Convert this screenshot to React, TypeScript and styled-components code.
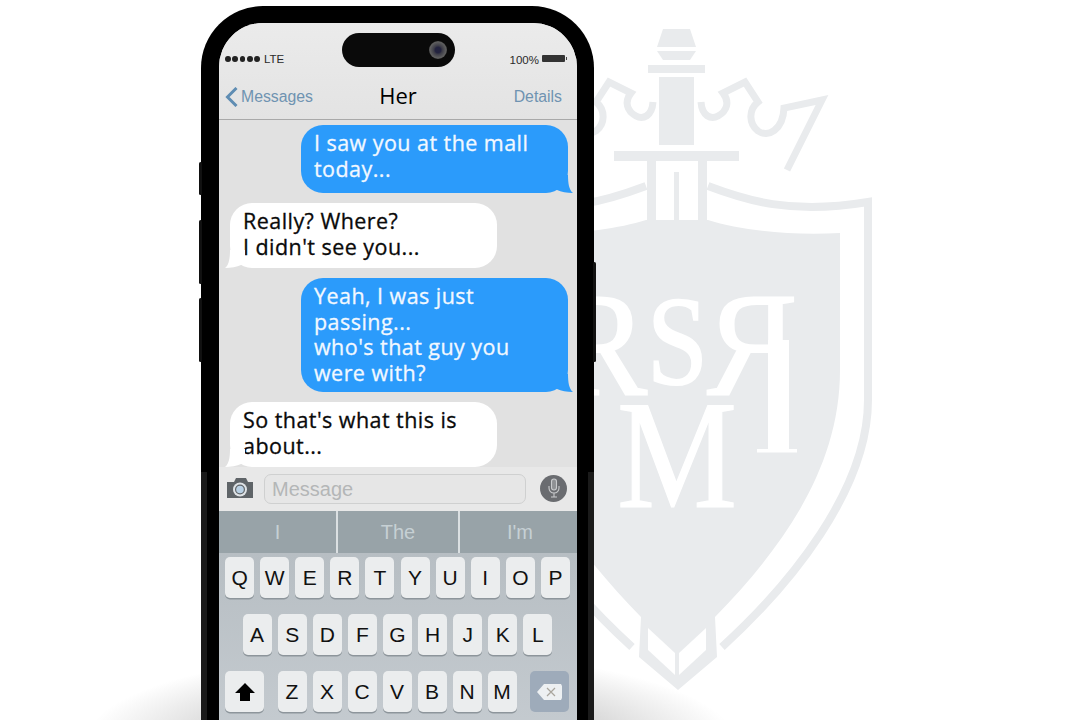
import styled, { createGlobalStyle } from 'styled-components';

const GlobalStyle = createGlobalStyle`
    html, body {
        margin: 0;
        background: #fff;
    }
`;

const Page = styled.div`
    position: relative;
    width: 1080px;
    height: 720px;
    overflow: hidden;
    background: #fff;
    padding: 6px 0 0 201px;
    box-sizing: border-box;
`;

const Watermark = styled.svg`
    position: absolute;
    left: 0;
    top: 0;
    width: 1080px;
    height: 720px;
`;

const FloorShadow = styled.div`
    position: absolute;
    left: 85px;
    top: 630px;
    width: 650px;
    height: 180px;
    background: radial-gradient(ellipse 50% 50% at 50% 62%, rgba(120, 120, 120, 0.58) 0%, rgba(140, 140, 140, 0.38) 55%, rgba(200, 200, 200, 0) 100%);
`;

const Phone = styled.div`
    position: relative;
    width: 393px;
    height: 760px;
    box-sizing: border-box;
    padding: 17px 17px 0 18px;
    background: #000;
    border-radius: 62px;
    &::before,
    &::after {
        content: '';
        position: absolute;
        top: 466px;
        bottom: 0;
        width: 6px;
        background: #1a1a1a;
    }
    &::before {
        left: 0;
    }
    &::after {
        right: 0;
    }
`;

const SideButton = styled.div<{ $top: number; $height: number; $right?: boolean }>`
    position: absolute;
    top: ${(props) => props.$top}px;
    height: ${(props) => props.$height}px;
    width: 3px;
    background: #111;
    border-radius: 2px;
    ${(props) => (props.$right ? 'right: -2px;' : 'left: -2px;')}
`;

const Screen = styled.div`
    position: relative;
    z-index: 1;
    height: 743px;
    overflow: hidden;
    background: #e2e2e2;
    border-radius: 44px 44px 0 0;
`;

const Island = styled.div`
    position: absolute;
    left: 123px;
    top: 10px;
    width: 113px;
    height: 34px;
    background: #0a0a0a;
    border-radius: 17px;
`;

const CameraLens = styled.div`
    position: absolute;
    right: 8px;
    top: 8px;
    width: 18px;
    height: 18px;
    border-radius: 50%;
    background: radial-gradient(circle, #23233f 0 22%, #3d3d48 34%, #5e5e5e 62%, #1c1c1c 100%);
`;

const Header = styled.header`
    height: 97px;
    box-sizing: border-box;
    background: linear-gradient(#ebebeb, #e3e3e3);
    border-bottom: 1px solid #a9a9a9;
`;

const StatusRow = styled.div`
    display: flex;
    align-items: center;
    justify-content: space-between;
    height: 14px;
    padding: 29px 12px 0 6px;
    font-family: 'Liberation Sans', sans-serif;
    font-size: 11.5px;
    color: #2a2a2a;
`;

const Carrier = styled.span`
    display: flex;
    align-items: center;
    gap: 4px;
`;

const Dots = styled.span`
    display: flex;
    gap: 1.5px;
`;

const Dot = styled.i`
    width: 5.8px;
    height: 5.8px;
    border-radius: 50%;
    background: #222;
`;

const Power = styled.span`
    display: flex;
    align-items: center;
    gap: 3px;
    padding-top: 1px;
`;

const Battery = styled.i`
    position: relative;
    width: 23px;
    height: 7px;
    margin-top: -3px;
    background: #333;
    border-radius: 1px;
    &::after {
        content: '';
        position: absolute;
        right: -2px;
        top: 2px;
        width: 1px;
        height: 3px;
        background: #444;
    }
`;

const NavRow = styled.div`
    display: grid;
    grid-template-columns: 1fr auto 1fr;
    align-items: center;
    height: 30px;
    margin-top: 14px;
    padding: 0 15px;
`;

const BackLink = styled.span`
    display: flex;
    align-items: center;
    gap: 3px;
    margin-left: -9px;
    padding-top: 2px;
    font-family: 'Liberation Sans', sans-serif;
    font-size: 15.8px;
    color: #6f93b1;
`;

const Title = styled.h1`
    margin: 0;
    padding-bottom: 2px;
    font-family: 'Open Sans', sans-serif;
    font-size: 22px;
    font-weight: 400;
    color: #000;
`;

const DetailsLink = styled.span`
    justify-self: end;
    padding-top: 2px;
    font-family: 'Liberation Sans', sans-serif;
    font-size: 15.8px;
    color: #6f93b1;
`;

const Thread = styled.main`
    display: flex;
    flex-direction: column;
    gap: 10px;
    height: 342px;
    padding: 5px 9px 0 11px;
    background: #e1e1e1;
`;

const Bubble = styled.div<{ $mine?: boolean; $minHeight?: number }>`
    position: relative;
    width: 267px;
    min-height: ${(props) => props.$minHeight ?? 0}px;
    box-sizing: border-box;
    padding: 5px 13px 7px;
    border-radius: 22px;
    font-family: 'Open Sans', sans-serif;
    font-size: 21.5px;
    line-height: 25.6px;
    letter-spacing: 0.45px;
    font-weight: 400;
    -webkit-text-stroke: 0.3px currentColor;
    color: ${(props) => (props.$mine ? '#f2f8ff' : '#0a0a0a')};
    background: ${(props) => (props.$mine ? '#2b9bfb' : '#fff')};
    align-self: ${(props) => (props.$mine ? 'flex-end' : 'flex-start')};
    &::after {
        content: '';
        position: absolute;
        bottom: 0;
        width: 20px;
        height: 18px;
        background: inherit;
        clip-path: path('M0 0 L15 0 C15 8 16 15 20 18 C14 18 8 17 4 15 L0 14 Z');
        ${(props) => (props.$mine ? 'right: -5px;' : 'left: -5px; transform: scaleX(-1);')}
    }
`;

const Composer = styled.div`
    display: flex;
    align-items: center;
    height: 44px;
    box-sizing: border-box;
    padding: 0 10px 2px 7px;
    background: #e8e8e8;
`;

const MessageField = styled.div`
    display: flex;
    align-items: center;
    width: 262px;
    height: 30px;
    box-sizing: border-box;
    margin: 2px 14px 0 10px;
    padding-left: 7px;
    border: 1.5px solid #cfd0d0;
    border-radius: 7px;
    background: #e6e6e6;
    font-family: 'Liberation Sans', sans-serif;
    font-size: 20px;
    color: #b4b6b7;
`;

const MicButton = styled.div`
    display: flex;
    align-items: center;
    justify-content: center;
    width: 27px;
    height: 27px;
    border-radius: 50%;
    background: #6a6c70;
`;

const Suggestions = styled.div`
    display: grid;
    grid-template-columns: 117px 120px 1fr;
    column-gap: 2px;
    height: 42px;
    background: #dbe0e2;
`;

const Suggestion = styled.div`
    display: flex;
    align-items: center;
    justify-content: center;
    background: #98a3a8;
    font-family: 'Liberation Sans', sans-serif;
    font-size: 20px;
    color: #c6d0d4;
    &:last-child {
        padding-left: 3px;
    }
`;

const Keyboard = styled.div`
    display: flex;
    flex-direction: column;
    gap: 16px;
    height: 190px;
    padding-top: 4px;
    background: linear-gradient(#b7bec3, #c6ccd1);
`;

const KeyRow = styled.div<{ $spread?: boolean }>`
    display: flex;
    gap: 6.1px;
    justify-content: ${(props) => (props.$spread ? 'space-between' : 'center')};
    padding: 0 ${(props) => (props.$spread ? 8 : 7)}px 0 6px;
`;

const KeyGroup = styled.div`
    display: flex;
    gap: 6px;
`;

const Key = styled.div<{ $wide?: boolean; $dark?: boolean }>`
    display: flex;
    align-items: center;
    justify-content: center;
    width: ${(props) => (props.$wide ? 39 : 29)}px;
    height: 41px;
    border-radius: 5px;
    background: ${(props) => (props.$dark ? '#9eabba' : '#ebedee')};
    box-shadow: ${(props) => (props.$dark ? 'none' : '0 1.5px 0 #8d959b')};
    font-family: 'Liberation Sans', sans-serif;
    font-size: 21px;
    color: #111;
`;

const shieldColor = '#e9ebed';

function CrownHalf() {
    return (
        <>
            <path
                d="M701 102 C702 116 711 120 718 116 C727 111 730 102 723 93 L745 82 L758 102 C748 110 749 124 758 131 C768 138 783 130 784 108 L822 100 L787 170"
                fill="none"
                stroke={shieldColor}
                strokeWidth="7"
            />
            <path d="M708 186 C745 200 790 215 868 202 L868 400 C868 490 790 585 722 647" fill="none" stroke={shieldColor} strokeWidth="8" />
        </>
    );
}

function ShieldLogo() {
    return (
        <Watermark viewBox="0 0 1080 720">
            <g fill={shieldColor}>
                <polygon points="663,29 690,29 696,47 657,47" />
                <polygon points="657,51 696,51 690,60 663,60" />
                <rect x="648" y="65" width="57" height="8" />
                <rect x="659" y="77" width="35" height="68" />
                <rect x="614" y="151" width="125" height="10" />
                <rect x="647" y="161" width="9" height="62" />
                <rect x="698" y="161" width="9" height="62" />
                <rect x="674" y="172" width="5" height="48" />
                <path d="M708 220 C740 230 790 236 840 233 L840 370 C840 470 780 550 715 617 L717 657 L678 690 L639 657 L641 617 C576 550 514 470 514 370 L514 233 C564 236 614 230 646 220 Z" />
            </g>
            <CrownHalf />
            <g transform="translate(1354 0) scale(-1 1)">
                <CrownHalf />
            </g>
            <g fill="#fff">
                <polygon points="648,628 675,653 675,675 648,650" />
                <polygon points="706,628 679,653 679,675 706,650" />
            </g>
            <g fontFamily="'Liberation Serif', serif" fill="#fff" stroke="#fff" strokeWidth="2">
                <text x="557" y="395" fontSize="148" textLength="90" lengthAdjust="spacingAndGlyphs">R</text>
                <text x="647" y="384" fontSize="128" textLength="61" lengthAdjust="spacingAndGlyphs">S</text>
                <text x="707" y="395" fontSize="148" textLength="90" lengthAdjust="spacingAndGlyphs">Я</text>
            </g>
            <text x="617" y="507" fontFamily="'Liberation Serif', serif" fontSize="155" textLength="120" lengthAdjust="spacingAndGlyphs" fill="#fff" stroke="#fff" strokeWidth="1.2">
                M
            </text>
            {/* the mirrored R has a long stem that runs past its leg */}
            <rect x="752" y="388" width="47" height="10" fill={shieldColor} />
            <g fill="#fff">
                <rect x="768" y="340" width="21" height="110" />
                <rect x="757" y="449" width="40" height="3.5" />
            </g>
        </Watermark>
    );
}

function CameraIcon() {
    return (
        <svg width="28" height="22" viewBox="0 0 28 22">
            <path d="M1 5 H8 L10 1 H20 L22 5 H27 V21 H1 Z" fill="#5f6468" />
            <circle cx="14" cy="12.5" r="7" fill="#dfe3e6" />
            <circle cx="14" cy="12.5" r="5" fill="#5f6468" />
            <circle cx="14" cy="12.5" r="3.8" fill="#b9d0e4" />
        </svg>
    );
}

function MicIcon() {
    return (
        <svg width="14" height="20" viewBox="0 0 14 20" fill="none" stroke="#c9cbcd" strokeWidth="1.1">
            <rect x="4.5" y="1" width="5" height="11" rx="2.5" fill="#8f9194" />
            <path d="M2 8 V10 C2 13 4 15 7 15 C10 15 12 13 12 10 V8 M7 15 V19 M4 19 H10" />
        </svg>
    );
}

function ShiftIcon() {
    return (
        <svg width="20" height="20" viewBox="0 0 20 20">
            <path d="M10 1 L20 11 H15 V19 H5 V11 H0 Z" fill="#000" />
        </svg>
    );
}

function DeleteIcon() {
    return (
        <svg width="26" height="18" viewBox="0 0 26 18">
            <path d="M7 1 H24 L25 3 V15 L24 17 H7 L0 9 Z" fill="#edf0f2" />
            <path d="M10 5 L18 13 M18 5 L10 13" stroke="#a9a59d" strokeWidth="1.2" />
        </svg>
    );
}

function App() {
    const topRow = ['Q', 'W', 'E', 'R', 'T', 'Y', 'U', 'I', 'O', 'P'];
    const middleRow = ['A', 'S', 'D', 'F', 'G', 'H', 'J', 'K', 'L'];
    const bottomRow = ['Z', 'X', 'C', 'V', 'B', 'N', 'M'];

    return (
        <Page>
            <GlobalStyle />
            <ShieldLogo />
            <FloorShadow />
            <Phone>
                <SideButton $top={156} $height={33} />
                <SideButton $top={214} $height={64} />
                <SideButton $top={292} $height={64} />
                <SideButton $right $top={256} $height={100} />
                <Screen>
                    <Header>
                        <StatusRow>
                            <Carrier>
                                <Dots>
                                    {[0, 1, 2, 3, 4].map((dot) => (
                                        <Dot key={dot} />
                                    ))}
                                </Dots>
                                LTE
                            </Carrier>
                            <Power>
                                100%
                                <Battery />
                            </Power>
                        </StatusRow>
                        <NavRow>
                            <BackLink>
                                <svg width="13" height="20" viewBox="0 0 13 20" fill="none" stroke="#5f8db3" strokeWidth="3">
                                    <path d="M11.5 1 L2.5 10 L11.5 19" />
                                </svg>
                                Messages
                            </BackLink>
                            <Title>Her</Title>
                            <DetailsLink>Details</DetailsLink>
                        </NavRow>
                    </Header>
                    <Thread>
                        <Bubble $mine $minHeight={68}>
                            I saw you at the mall
                            <br />
                            today...
                        </Bubble>
                        <Bubble $minHeight={65}>
                            Really? Where?
                            <br />
                            I didn't see you...
                        </Bubble>
                        <Bubble $mine>
                            Yeah, I was just
                            <br />
                            passing...
                            <br />
                            who's that guy you
                            <br />
                            were with?
                        </Bubble>
                        <Bubble $minHeight={65}>
                            So that's what this is
                            <br />
                            about...
                        </Bubble>
                    </Thread>
                    <Composer>
                        <CameraIcon />
                        <MessageField>Message</MessageField>
                        <MicButton>
                            <MicIcon />
                        </MicButton>
                    </Composer>
                    <Suggestions>
                        <Suggestion>I</Suggestion>
                        <Suggestion>The</Suggestion>
                        <Suggestion>I'm</Suggestion>
                    </Suggestions>
                    <Keyboard>
                        <KeyRow>
                            {topRow.map((letter) => (
                                <Key key={letter}>{letter}</Key>
                            ))}
                        </KeyRow>
                        <KeyRow>
                            {middleRow.map((letter) => (
                                <Key key={letter}>{letter}</Key>
                            ))}
                        </KeyRow>
                        <KeyRow $spread>
                            <Key $wide>
                                <ShiftIcon />
                            </Key>
                            <KeyGroup>
                                {bottomRow.map((letter) => (
                                    <Key key={letter}>{letter}</Key>
                                ))}
                            </KeyGroup>
                            <Key $wide $dark>
                                <DeleteIcon />
                            </Key>
                        </KeyRow>
                    </Keyboard>
                    <Island>
                        <CameraLens />
                    </Island>
                </Screen>
            </Phone>
        </Page>
    );
}

export default App;
